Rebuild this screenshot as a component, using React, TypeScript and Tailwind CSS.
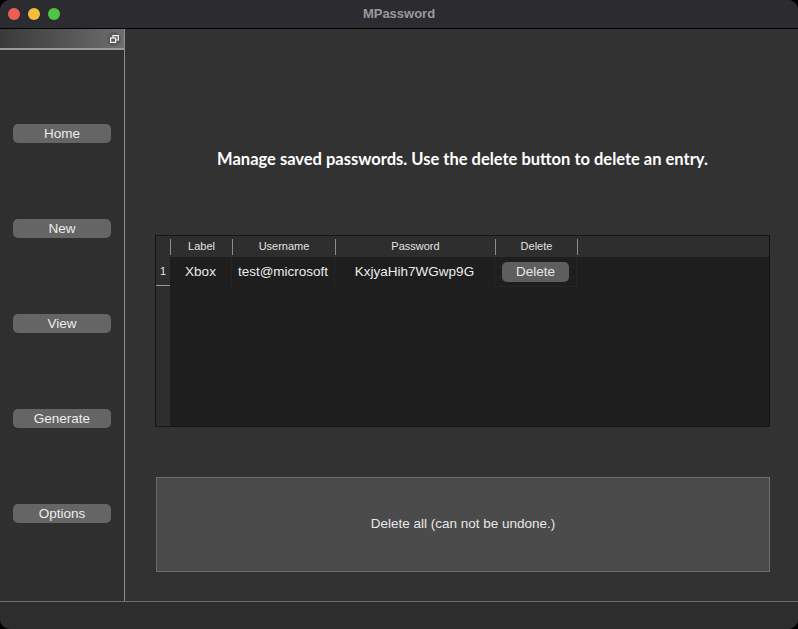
import React from 'react';

const sideItems = ['Home', 'New', 'View', 'Generate', 'Options'];

function HeaderCell({ label, width, last }: { label: string; width: string; last?: boolean }) {
  return (
    <div className={`flex h-full items-center ${width}`}>
      <div className="h-[16px] w-px bg-[#8c8c8c]" />
      <div className="flex-1 text-center text-[11px] font-medium text-[#e2e2e2]">{label}</div>
      {last && <div className="h-[16px] w-px bg-[#8c8c8c]" />}
    </div>
  );
}

export default function App() {
  return (
    <div className="h-[629px] w-[798px] bg-black font-['Liberation_Sans',Arial,sans-serif]">
      <div className="flex h-full w-full flex-col overflow-hidden rounded-[10px] bg-[#323232]">
        {/* title bar */}
        <div className="relative flex h-[29px] shrink-0 items-center border-b border-black bg-[#2c2b30]">
          <div className="flex gap-[8px] pl-[8px]">
            <span className="h-[12px] w-[12px] rounded-full bg-[#ec5f56]" />
            <span className="h-[12px] w-[12px] rounded-full bg-[#f4be3d]" />
            <span className="h-[12px] w-[12px] rounded-full bg-[#4ec546]" />
          </div>
          <div className="absolute inset-x-0 text-center text-[13px] font-bold text-[#9a9a9e]">MPassword</div>
        </div>

        <div className="flex flex-1">
          {/* sidebar */}
          <div className="flex w-[125px] shrink-0 flex-col border-r border-[#8e8e8e] bg-[#2f2f2f]">
            <div className="flex h-[21px] items-center justify-end border-b-2 border-[#9c9c9c] bg-gradient-to-r from-[#3a3a3a] to-[#6e6e6e] pr-[3px]">
              <div className="flex h-[14px] w-[14px] items-center justify-center rounded-full bg-[#5a5a5a]">
                <svg width="9" height="8" viewBox="0 0 9 8" fill="none" stroke="#f0f0f0" strokeWidth="1.2">
                  <rect x="0.6" y="3" width="5" height="4.4" />
                  <path d="M3 3V0.6h5.4v4.4H5.6" />
                </svg>
              </div>
            </div>
            <div className="flex flex-col gap-[76px] pl-[13px] pt-[74px]">
              {sideItems.map((item) => (
                <button
                  key={item}
                  className="h-[19px] w-[98px] rounded-[5px] bg-[#656565] text-[13.5px] leading-[19px] text-[#ececec]"
                >
                  {item}
                </button>
              ))}
            </div>
          </div>

          {/* main */}
          <div className="flex flex-1 flex-col pl-[30px] pr-[28px]">
            <div className="mt-[120px] h-[20px] text-center font-['Lato',sans-serif] text-[16.5px] font-bold leading-[20px] text-white">
              Manage saved passwords. Use the delete button to delete an entry.
            </div>

            <div className="mt-[66px] flex h-[192px] flex-col border border-[#141414] bg-[#1e1e1e]">
              <div className="flex h-[21px] bg-[#2e2e2e]">
                <div className="w-[14px]" />
                <HeaderCell label="Label" width="w-[62px]" />
                <HeaderCell label="Username" width="w-[103px]" />
                <HeaderCell label="Password" width="w-[160px]" />
                <HeaderCell label="Delete" width="w-[83px]" last />
              </div>
              <div className="flex flex-1">
                <div className="flex w-[14px] flex-col bg-[#2e2e2e]">
                  <div className="flex h-[29px] items-center border-b border-[#9a9a9a] pl-[4px] text-[11px] text-[#e6e6e6]">1</div>
                </div>
                <div className="flex h-[30px] text-[13.5px] text-[#ececec]">
                  <div className="flex w-[62px] items-center justify-center border-r border-dotted border-[#2c2c2c]">Xbox</div>
                  <div className="flex w-[103px] items-center justify-center border-r border-dotted border-[#2c2c2c]">test@microsoft</div>
                  <div className="flex w-[160px] items-center justify-center border-r border-dotted border-[#2c2c2c]">KxjyaHih7WGwp9G</div>
                  <div className="flex w-[82px] items-center justify-center border-r border-b border-dotted border-[#2c2c2c]">
                    <button className="h-[20px] w-[67px] rounded-[5px] bg-[#5e5e5e] text-[13.5px] text-[#e6e6e6]">Delete</button>
                  </div>
                </div>
              </div>
            </div>

            <button className="mt-[50px] ml-px flex h-[95px] items-center justify-center border border-[#6c6c6c] bg-[#4b4b4b] text-[13.5px] text-[#e8e8e8]">
              Delete all (can not be undone.)
            </button>
          </div>
        </div>

        {/* status bar */}
        <div className="h-[28px] shrink-0 border-t border-[#6e6e6e] bg-[#2d2d2d]" />
      </div>
    </div>
  );
}
